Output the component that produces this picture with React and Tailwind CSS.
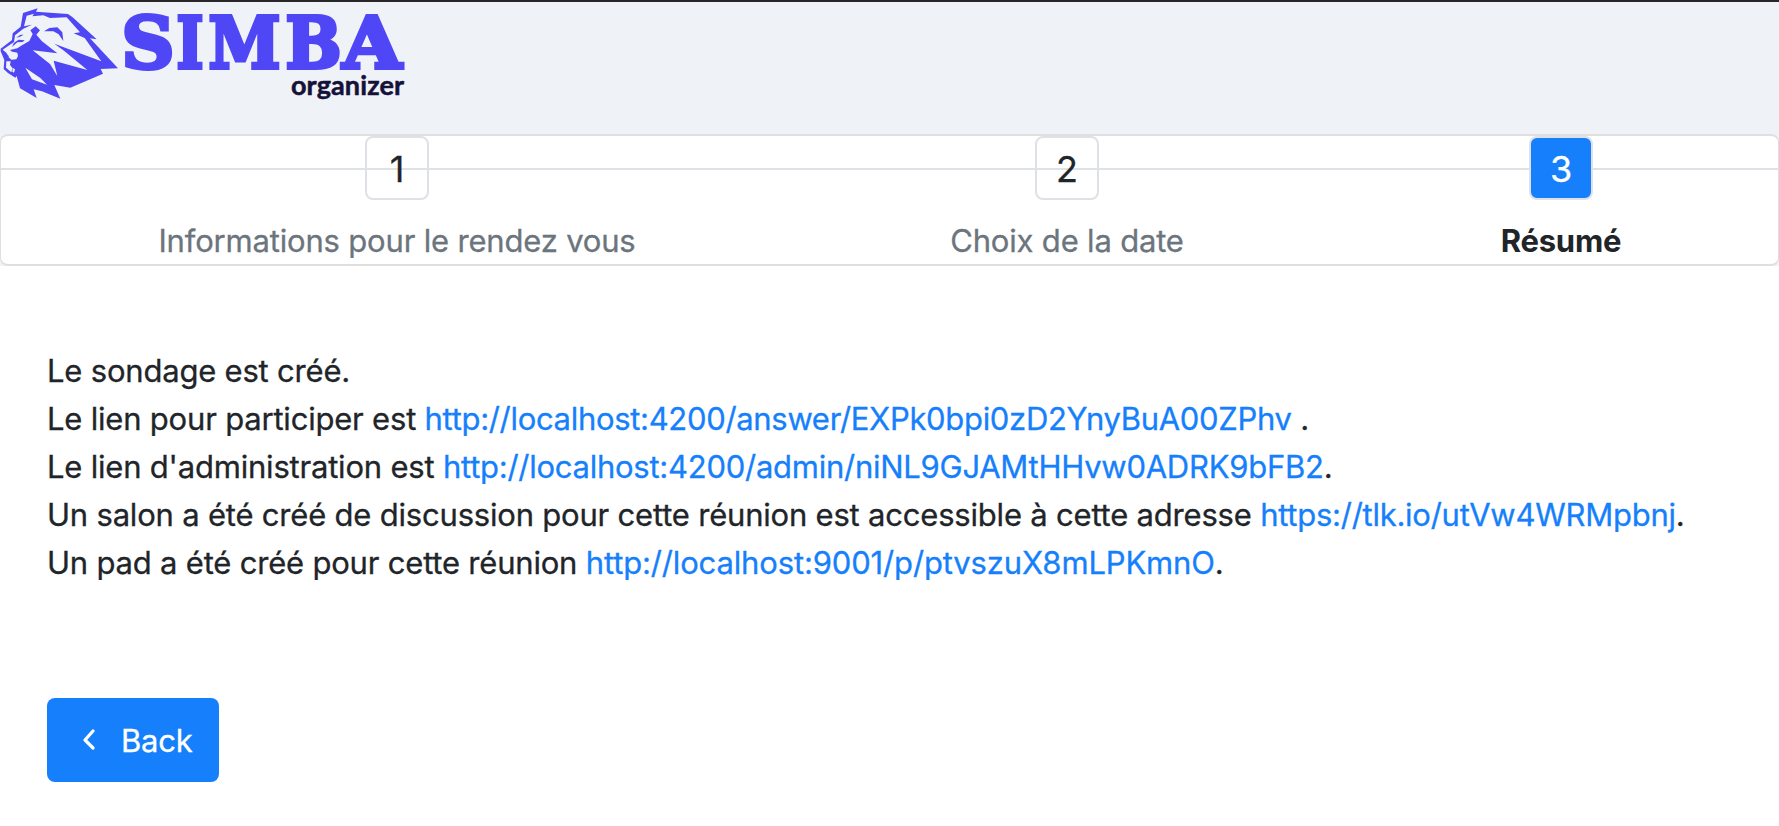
const INK = "#4f46f5";
const SKY = "#eff3f8";

function Lion() {
  return (
    <svg viewBox="0 0 390 330" className="h-[110px] w-[130px] shrink-0" aria-hidden="true">
      <path fill={INK} d="M69 39L113 25L108 35L204 42L217 51L290 118L270 115L354 205L302 207L309 221L211 263L163 255L181 296L126 274L101 268L110 294L60 265L50 228L46 233L24 219L11 207L13 180L2 154L2 146L36 120L38 100L62 80Z" />
      <g fill={SKY}>
        <path d="M80 47L102 41L97 49L130 46L150 54L200 52L240 97L221 100L254 114L304 184L163 131L192 152L262 210L161 182L172 228L150 192L98 151L172 160L126 124L109 104L120 91L107 79L91 91L98 102L88 123L66 136L52 145L30 150L37 156L25 168L19 158L8 149L42 126L45 106L70 86L96 74L72 79Z" />
        <path d="M27 160L38 155L52 158L54 168L49 178L34 179L26 172Z" />
        <path d="M19 184L32 184L30 195L38 205L34 217L18 203Z" />
        <path d="M39 204L45 208L42 218L37 215Z" />
        <path d="M76 203L121 234L141 254L96 238Z" />
      </g>
      <g fill={INK}>
        <path d="M132 94L148 84L172 82L187 97L190 123L176 103L160 94Z" />
        <path d="M45 126L56 119L74 121L68 126L52 127L36 141L41 130Z" />
        <path d="M48 113L62 104L71 104L60 110Z" />
      </g>
    </svg>
  );
}

const letters = [
  ["S", 121.5, 53],
  ["I", 176.5, 27],
  ["M", 208.5, 72],
  ["B", 285.5, 56],
  ["A", 342.5, 59],
];

function Logo() {
  return (
    <div className="flex">
      <Lion />
      <svg viewBox="130 0 290 110" className="h-[110px] w-[290px] overflow-visible">
        {letters.map(([c, x, w]) => (
          <text key={c} x={x} y="68" textLength={w} lengthAdjust="spacingAndGlyphs" fontFamily="DejaVu Serif" fontWeight="700" fontSize="71" fill={INK} stroke={INK} strokeWidth="4">{c}</text>
        ))}
        <text x="291" y="94.5" textLength="113" fontFamily="Lato" fontWeight="700" fontSize="27" fill="#151139" stroke="#151139" strokeWidth="0.5">organizer</text>
      </svg>
    </div>
  );
}

function Step({ n, label, active, width }) {
  return (
    <div className={`${width} flex shrink-0 flex-col items-center`}>
      <div className="flex w-full items-center">
        <div className="mt-[2px] h-[2px] flex-1 bg-[#dee2e6]" />
        <div className={`relative grid size-16 place-items-center rounded-[8px] border-2 border-[#dee2e6] pt-[2px] text-[36px] leading-none ${active ? "bg-[#167ffc] text-white" : "bg-white text-[#212529]"}`}>
          {!active && <div className="absolute inset-x-0 top-[30px] h-[2px] bg-[#dee2e6]" />}
          <span className="relative">{n}</span>
        </div>
        <div className="mt-[2px] h-[2px] flex-1 bg-[#dee2e6]" />
      </div>
      <div className={`mt-[17px] whitespace-nowrap text-[31px] leading-[48px] ${active ? "font-[650] tracking-[-0.2px] text-[#212529] [-webkit-text-stroke:0px]" : "tracking-[-0.18px] text-[#6c757d]"}`}>{label}</div>
    </div>
  );
}

const lines = [
  ["Le sondage est créé.", "", "", "tracking-normal"],
  ["Le lien pour participer est ", "http://localhost:4200/answer/EXPk0bpi0zD2YnyBuA00ZPhv", " .", "tracking-[-0.32px]"],
  ["Le lien d'administration est ", "http://localhost:4200/admin/niNL9GJAMtHHvw0ADRK9bFB2", ".", "tracking-[-0.26px]"],
  ["Un salon a été créé de discussion pour cette réunion est accessible à cette adresse ", "https://tlk.io/utVw4WRMpbnj", ".", "tracking-[-0.26px]"],
  ["Un pad a été créé pour cette réunion ", "http://localhost:9001/p/ptvszuX8mLPKmnO", ".", "tracking-[-0.15px]"],
];

export default function App() {
  return (
    <div className="h-[826px] w-[1779px] overflow-hidden bg-white font-['Inter',sans-serif] text-[#212529] [-webkit-text-stroke:0.3px]">
      <header className="h-[134px] border-t-2 border-[#282626] bg-[#eff3f8]">
        <div className="-mt-[2px]"><Logo /></div>
      </header>
      <div className="bg-[#eff3f8]">
        <div className="flex h-[132px] rounded-[8px] border-x border-y-2 border-[#dfdfdf] bg-white">
          <Step n="1" label="Informations pour le rendez vous" width="w-[792px]" />
          <Step n="2" label="Choix de la date" width="w-[548px]" />
          <Step n="3" label="Résumé" active width="w-[440px]" />
        </div>
      </div>
      <main className="px-[47px] pt-[81px]">
        <div className="whitespace-pre text-[31px] leading-[48px] tracking-[-0.2px]">
          {lines.map(([before, link, after, tracking]) => (
            <p key={before}>{before}{link && <a className={`text-[#167ffc] ${tracking}`}>{link}</a>}{after}</p>
          ))}
        </div>
        <button className="mt-[111px] flex h-[84px] w-[172px] items-center rounded-[8px] bg-[#167ffc] pl-[35px] text-[31px] leading-[48px] tracking-[-0.2px] text-white">
          <svg viewBox="0 0 14 22" className="h-[22px] w-[14px]" fill="none" stroke="white" strokeWidth="3.2" strokeLinecap="round" strokeLinejoin="round"><path d="M11 2L3 11L11 19" /></svg>
          <span className="ml-[25px] pt-px">Back</span>
        </button>
      </main>
    </div>
  );
}
